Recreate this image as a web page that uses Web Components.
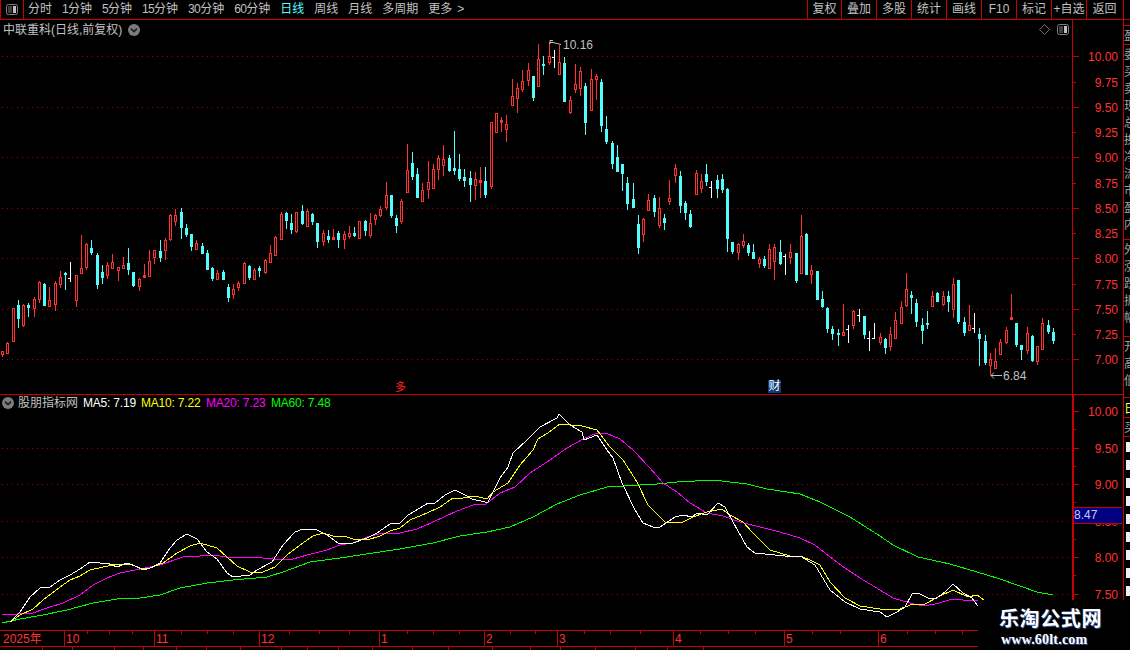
<!DOCTYPE html>
<html lang="zh">
<head>
<meta charset="utf-8">
<title>中联重科</title>
<style>
  html, body { margin: 0; background: #000; }
</style>
</head>
<body>
<stock-app></stock-app>
<script>
const RED_LINE = '#c80000'
const RED_TEXT = '#ff3232'
const CYAN = '#54fcfc'
const DOT = '#a00000'
const GREY = '#c0c0c0'
const LATIN = '"Liberation Sans", "Noto Sans CJK SC", sans-serif'

// Candles, left to right: kind, high, body top, body bottom, low (page y in pixels).
const CANDLES = `r 351 351 354 357|r 342 343 353 354|r 308 308 341 342|c 300 305 318 328|r 304 305 325 327
c 303 305 307 317|r 297 299 308 317|r 281 282 299 303|c 283 284 305 305|r 287 300 306 306
r 281 283 304 311|r 271 277 284 288|c 272 273 274 290|w 262 278 278 282|r 275 275 300 307
r 235 268 273 273|r 243 244 267 270|c 240 248 252 255|c 253 255 284 289|c 265 272 277 284
r 262 265 275 279|r 254 262 268 269|r 267 267 270 281|r 257 265 268 268|c 248 263 269 275
c 272 272 285 287|r 278 279 286 291|f 264 275 277 278|r 250 261 276 276|r 250 250 257 264
c 240 251 257 262|r 238 240 250 260|r 214 215 239 241|r 209 215 221 226|c 208 212 227 239
c 224 228 234 237|c 234 234 246 251|r 240 243 249 249|c 243 246 253 254|c 250 253 269 270
c 267 268 278 281|r 270 273 279 279|c 270 272 279 280|c 284 287 297 302|r 284 289 294 299
r 281 283 287 291|r 262 263 283 283|c 265 266 277 280|r 268 270 279 279|c 266 268 270 277
r 259 260 272 274|r 245 253 262 262|r 236 237 255 256|r 212 214 239 240|c 212 213 220 229
c 214 223 229 234|r 212 212 231 233|c 205 211 223 225|r 209 211 226 226|c 213 214 221 225
c 223 223 241 248|r 230 233 241 246|c 230 236 239 243|f 229 237 239 239|c 231 233 239 248
r 231 234 239 249|r 226 233 236 239|c 227 233 235 237|r 221 221 238 238|c 220 221 230 236
r 213 223 235 238|r 214 215 219 225|r 206 209 215 217|r 182 195 207 210|c 195 195 215 218
c 215 218 225 233|r 199 201 221 224|r 144 170 192 192|c 152 163 176 180|c 168 174 197 197
r 183 190 201 201|r 161 182 189 199|r 164 169 188 189|r 155 158 169 180|r 145 159 165 176
c 155 158 170 172|c 131 168 170 175|c 154 169 178 181|c 169 177 180 187|c 171 178 184 202
r 172 179 185 200|f 167 180 182 198|c 167 181 194 198|r 122 122 186 189|r 113 113 132 132
f 117 120 122 132|r 115 124 129 142|r 79 96 105 106|r 83 88 98 113|r 70 81 89 92
r 63 70 80 86|c 76 76 97 101|r 44 59 86 86|c 56 64 65 75|r 42 56 62 65
w 50 57 57 68|r 45 62 74 74|c 57 63 101 102|r 96 100 112 114|r 64 84 89 93
r 67 71 88 96|c 83 86 122 135|r 69 79 110 110|r 74 76 79 100|c 79 82 125 132
c 116 129 141 144|c 141 143 163 169|c 145 157 171 171|c 164 164 173 191|c 177 183 203 210
c 183 199 207 207|c 215 224 247 254|r 218 219 234 242|r 194 200 210 210|c 195 198 211 217
r 197 208 225 228|c 214 218 222 230|r 180 198 201 205|r 164 168 175 183|c 171 176 205 213
c 201 203 212 220|c 210 214 226 228|r 170 173 194 194|r 174 181 188 193|c 164 174 181 186
w 181 187 187 198|c 175 180 188 198|c 174 179 189 193|c 188 189 238 252|c 242 242 251 254
r 243 244 252 260|r 234 241 245 248|c 243 245 252 256|c 244 252 258 258|r 257 259 263 268
c 256 259 265 268|r 244 249 268 269|r 244 247 261 280|c 240 252 263 265|w 254 256 256 275
r 244 252 257 264|c 253 253 280 283|r 215 236 273 273|c 233 234 274 275|r 265 270 274 284
c 271 271 299 299|c 291 299 306 308|c 307 308 328 333|c 326 329 333 340|c 329 333 334 346
r 304 332 335 335|w 325 329 329 343|r 310 311 325 329|w 309 315 315 322|c 316 316 334 339
w 331 338 338 351|w 323 338 338 339|r 333 337 342 345|c 338 339 347 354|r 327 334 346 351
r 312 320 338 339|r 301 307 323 323|r 273 289 305 307|c 291 295 297 314|c 299 303 321 327
c 318 325 330 344|c 311 323 324 329|r 291 296 306 306|c 292 293 301 302|r 291 296 304 306
c 291 296 301 312|r 278 284 309 318|c 280 280 321 324|c 317 322 332 336|r 305 325 330 330
w 313 328 328 333|c 328 334 338 366|c 335 341 362 365|r 353 359 365 375|r 348 361 368 369
r 339 342 354 354|r 327 330 342 344|f 294 317 319 319|c 323 323 344 347|c 345 345 349 360
r 327 333 350 354|c 335 336 360 362|r 346 346 361 365|r 318 323 349 349|c 320 325 331 334
c 328 332 340 344`.split(/[|\n]/).map(row => {
  const [kind, ...values] = row.trim().split(' ')
  return [kind, ...values.map(Number)]
})

const MA_LINES = [
  { color: '#00ff00', points: '2,623 20,619 43,615 67,610 93,603 117,599 140,598 160,595 180,588 207,583 233,580 267,577 283,572 310,562 340,558 373,553 400,549 433,543 460,536 487,532 510,527 533,517 557,504 580,495 607,487 640,485 657,484 677,482 713,480 747,484 767,489 800,494 820,502 850,517 880,536 893,545 918,557 950,564 977,572 1000,579 1037,592 1053,595' },
  { color: '#ff00ff', points: '2,615 33,613 47,608 63,603 80,595 93,585 107,578 120,573 140,569 160,565 183,557 200,556 213,555 233,558 253,557 273,559 293,559 307,555 327,550 340,545 353,543 367,537 383,533 400,533 417,529 433,522 457,511 473,505 486,504 500,493 515,487 530,473 550,460 567,448 583,439 597,433 608,434 620,439 633,450 650,468 663,483 677,492 690,503 707,513 723,516 740,522 760,527 780,532 800,538 815,545 830,557 845,568 860,578 880,590 893,598 910,603 923,606 935,604 953,599 963,600 978,601' },
  { color: '#ffff00', points: '10,622 20,615 33,609 43,600 60,587 70,580 80,576 90,570 103,567 117,564 130,564 140,568 150,568 163,563 177,553 190,546 200,543 217,548 227,557 237,566 250,572 263,572 275,567 287,555 300,545 313,536 323,533 333,536 347,537 353,539 367,540 380,536 390,531 400,528 410,520 427,513 440,507 453,498 463,498 475,496 487,499 493,492 508,483 520,465 533,450 538,439 548,433 560,424 582,426 597,430 610,447 623,460 637,482 648,505 665,522 683,522 693,517 707,512 722,509 730,515 743,522 753,533 770,550 780,553 790,556 800,556 810,560 820,565 830,582 845,598 860,606 880,609 897,610 905,607 913,604 925,604 938,597 953,590 968,597 977,595 984,600' },
  { color: '#ffffff', points: '10,622 20,612 30,597 40,588 50,587 60,580 70,575 80,569 90,562 100,563 107,563 117,567 127,563 133,565 143,570 150,568 160,563 170,548 177,540 187,534 197,539 207,552 217,559 227,573 233,577 250,575 257,570 272,562 283,545 295,532 303,529 315,529 327,535 338,543 353,543 367,538 377,533 390,524 400,523 408,515 420,508 428,503 435,503 445,495 455,490 465,495 472,499 485,502 488,502 500,478 508,467 513,453 527,440 540,427 557,418 559,414 570,425 582,432 584,440 597,435 607,450 613,458 622,483 635,510 643,523 653,527 660,527 675,517 683,515 692,517 697,513 707,515 718,503 725,507 733,522 747,547 755,553 785,556 800,556 815,565 830,590 845,602 860,609 880,612 887,617 897,612 905,607 912,594 918,593 928,598 937,598 945,592 953,584 963,593 972,598 978,606' }
]

/**
 * Top bar with the period tabs on the left and the tool buttons on the right.
 */
const toolbarTemplate = document.createElement('template')
toolbarTemplate.innerHTML = `
  <style>
    :host {
      display: flex;
      height: 19px;
      border-bottom: 1px solid ${RED_LINE};
      color: ${GREY};
      font: 12px ${LATIN};
      line-height: 19px;
      white-space: nowrap;
    }
    .toggle {
      box-sizing: border-box;
      width: 24px;
      border-left: 1px solid ${RED_LINE};
      border-right: 1px solid ${RED_LINE};
      display: flex;
      align-items: center;
      justify-content: center;
    }
    .periods {
      display: flex;
      gap: 10px;
      padding-left: 4px;
      flex: 1;
    }
    .periods .on { color: #54fcfc; }
    em { font-style: normal; letter-spacing: -.67px; }
    .arrow { margin-left: 5px; }
    .tools { display: flex; }
    .tools span {
      box-sizing: border-box;
      width: 35px;
      text-align: center;
      border-left: 1px solid ${RED_LINE};
    }
    .tools span:first-child { width: 34px; }
    .tools span:last-child {
      width: 38px;
      padding-right: 1px;
      border-right: 1px solid ${RED_LINE};
      margin-right: 6px;
    }
    svg { display: block; }
  </style>
  <div class="toggle">
    <svg width="12" height="11" viewBox="0 0 12 11"><rect x=".5" y=".5" width="11" height="10" rx="2" fill="none" stroke="#808080"/><rect x="2" y="2" width="4" height="7" fill="#404040"/><rect x="7" y="2" width="3" height="7" fill="#c0c0c0"/></svg>
  </div>
  <div class="periods">
    <span>分时</span><span><em>1</em>分钟</span><span><em>5</em>分钟</span><span><em>15</em>分钟</span><span><em>30</em>分钟</span><span><em>60</em>分钟</span>
    <span class="on">日线</span><span>周线</span><span>月线</span><span>多周期</span><span>更多<span class="arrow">&gt;</span></span>
  </div>
  <div class="tools">
    <span>复权</span><span>叠加</span><span>多股</span><span>统计</span><span>画线</span><span>F10</span><span>标记</span><span>+自选</span><span>返回</span>
  </div>
`
customElements.define('tool-bar', class extends HTMLElement {
  constructor () {
    super()
    this.attachShadow({ mode: 'open' }).appendChild(toolbarTemplate.content.cloneNode(true))
  }
})

/**
 * Draws the dotted grid and whatever chart markup is passed in, in page coordinates.
 *
 * @param {number} top - Page y of the top of the svg.
 * @param {number} height - Height of the svg.
 * @param {number[]} rows - Page y of each dotted line.
 * @param {string} body - Svg markup of the chart.
 * @returns {string} The svg element as markup.
 */
function plotSvg (top, height, rows, body) {
  const grid = rows.map(y => `<line x1="2" x2="1072" y1="${y + 0.5}" y2="${y + 0.5}" stroke="${DOT}" stroke-dasharray="1 4"/>`).join('')
  return `<svg width="1072" height="${height}" viewBox="0 ${top} 1072 ${height}" shape-rendering="crispEdges">${grid}${body}</svg>`
}

/**
 * Draws one candle as pixel aligned rectangles.
 *
 * @param {Array} candle - Kind, high, body top, body bottom and low.
 * @param {number} index - Position of the candle in the series.
 * @returns {string} Svg markup.
 */
function candleSvg ([kind, high, top, bottom, low], index) {
  const x = Math.floor(2.5 + 5.255 * index)
  const box = (left, y1, width, y2, fill) => `<rect x="${left}" y="${y1}" width="${width}" height="${Math.max(y2 - y1, 1)}" fill="${fill}"/>`
  if (kind === 'w') {
    return box(x, high, 1, low, '#fff') + box(x - 2, top, 2, top + 1, '#fff')
  }
  const color = kind === 'c' ? CYAN : RED_TEXT
  let out = box(x, high, 1, low, color) + box(x - 1, top, 3, bottom + 1, color)
  if (kind === 'r' && bottom - top > 2) {
    out += box(x, top + 1, 1, bottom, '#000')
  }
  return out
}

/**
 * A value axis: a red rule with ticks and right aligned labels. Pass ticks as a property.
 */
customElements.define('price-axis', class extends HTMLElement {
  constructor () {
    super()
    this.attachShadow({ mode: 'open' })
  }

  /**
   * Renders the axis.
   *
   * @param {object} options - Top, height and the [y, label, long] ticks of the axis.
   */
  draw ({ top, height, ticks, thick }) {
    const marks = ticks.map(([y, label, long]) => `
      <rect x="0" y="${y}" width="${long ? 6 : 3}" height="1" fill="${RED_LINE}" shape-rendering="crispEdges"/>
      ${label ? `<text x="45" y="${y + 5}" text-anchor="end">${label}</text>` : ''}`).join('')
    this.shadowRoot.innerHTML = `
      <style>
        :host {
          display: block;
          position: relative;
          width: 51px;
          height: ${height}px;
          box-sizing: border-box;
          border-left: ${thick ? 2 : 1}px solid ${RED_LINE};
        }
        svg { display: block; margin-left: ${thick ? -1 : 0}px; }
        text { font: 12px ${LATIN}; fill: ${RED_TEXT}; }
      </style>
      <svg width="51" height="${height}" viewBox="0 ${top} 51 ${height}">${marks}</svg>
      <slot></slot>
    `
  }
})

/**
 * Small round grey button with a chevron, used next to the pane titles.
 */
customElements.define('round-chevron', class extends HTMLElement {
  constructor () {
    super()
    this.attachShadow({ mode: 'open' }).innerHTML = `
      <style>
        :host { display: inline-block; width: 12px; height: 12px; }
        svg { display: block; }
      </style>
      <svg width="12" height="12" viewBox="0 0 12 12">
        <circle cx="6" cy="6" r="6" fill="#7c7c7c"/>
        <path d="M3 4.6 6 7.6 9 4.6" fill="none" stroke="#1c1c1c" stroke-width="1.6"/>
      </svg>
    `
  }
})

/**
 * Upper pane: title, candles, high and low notes, event markers and price axis.
 */
customElements.define('kline-pane', class extends HTMLElement {
  constructor () {
    super()
    const candles = CANDLES.map(candleSvg).join('')
    const notes = `
      <g shape-rendering="auto" fill="none" stroke="#c0c0c0">
        <path d="M553 40.5 H550 V44 M550 42.5 H553 L561 44.5"/>
        <path d="M991 375.5 H1002 M994 372.5 L991 375.5 L994 378.5"/>
      </g>`
    this.attachShadow({ mode: 'open' }).innerHTML = `
      <style>
        :host {
          display: flex;
          height: 374px;
          border-bottom: 1px solid ${RED_LINE};
          position: relative;
          font: 12px ${LATIN};
          color: ${GREY};
        }
        svg { display: block; }
        .title {
          position: absolute;
          left: 3px;
          top: 2px;
          line-height: 16px;
          display: flex;
          align-items: center;
          gap: 6px;
        }
        .corner {
          position: absolute;
          left: 1039px;
          top: 4px;
          display: flex;
          align-items: center;
          gap: 7px;
        }
        .note { position: absolute; line-height: 14px; }
        .high { left: 563px; top: 18px; }
        .low { left: 1003px; top: 349px; }
        .badge {
          position: absolute;
          line-height: 13px;
          height: 13px;
        }
        .cai { left: 768px; top: 360px; width: 13px; background: #0a3c78; color: #fff; text-align: center; }
        .duo { left: 395px; top: 361px; color: #ff2020; font-size: 11px; }
      </style>
      ${plotSvg(20, 374, [56, 107, 157, 208, 258, 309, 359], candles + notes)}
      <price-axis></price-axis>
      <div class="title">中联重科(日线,前复权)<round-chevron></round-chevron></div>
      <div class="corner">
        <svg width="11" height="11" viewBox="0 0 11 11"><path d="M5.5 .5 10.5 5.5 5.5 10.5 .5 5.5Z" fill="none" stroke="#707070"/></svg>
        <svg width="13" height="11" viewBox="0 0 13 11"><rect x=".5" y=".5" width="11" height="10" rx="2" fill="none" stroke="#808080"/><rect x="2" y="2" width="4" height="7" fill="#404040"/><rect x="7" y="2" width="3" height="7" fill="#c0c0c0"/></svg>
      </div>
      <span class="note high">10.16</span>
      <span class="note low">6.84</span>
      <span class="badge duo">多</span>
      <span class="badge cai">财</span>
    `
    const ticks = []
    const labels = ['10.00', '9.75', '9.50', '9.25', '9.00', '8.75', '8.50', '8.25', '8.00', '7.75', '7.50', '7.25', '7.00']
    const rows = [56, 82, 107, 132, 157, 183, 208, 233, 258, 284, 309, 334, 359]
    labels.forEach((label, i) => ticks.push([rows[i], label, i % 2 === 0]))
    this.shadowRoot.querySelector('price-axis').draw({ top: 20, height: 374, ticks })
  }
})

/**
 * Lower pane: moving averages with their legend, and the value axis with the cursor box.
 */
customElements.define('ma-pane', class extends HTMLElement {
  constructor () {
    super()
    const lines = MA_LINES.map(line => `<polyline points="${line.points}" fill="none" stroke="${line.color}" stroke-width="1"/>`).join('')
    this.attachShadow({ mode: 'open' }).innerHTML = `
      <style>
        :host {
          display: flex;
          height: 235px;
          position: relative;
          font: 12px ${LATIN};
        }
        svg { display: block; }
        .legend {
          position: absolute;
          left: 2px;
          top: 0;
          line-height: 16px;
          display: flex;
          align-items: center;
          white-space: nowrap;
        }
        .legend b { font-weight: 400; color: ${GREY}; margin: 0 6px 0 4px; width: 59px; }
        .legend span { width: 65px; letter-spacing: -.2px; }
        .cursor {
          position: absolute;
          left: 1074px;
          top: 112px;
          width: 48px;
          height: 15px;
          line-height: 15px;
          background: #000080;
          border-top: 1px solid ${RED_LINE};
          border-bottom: 1px solid ${RED_LINE};
          color: #c8c8ff;
        }
      </style>
      ${plotSvg(395, 235, [448, 484, 521, 557, 594], lines)}
      <price-axis></price-axis>
      <div class="legend">
        <round-chevron></round-chevron>
        <b>股朋指标网</b>
        <span style="color:#fff;width:58px">MA5: 7.19</span>
        <span style="color:#ff0">MA10: 7.22</span>
        <span style="color:#f0f">MA20: 7.23</span>
        <span style="color:#0f0">MA60: 7.48</span>
      </div>
      <div class="cursor">8.47</div>
    `
    const ticks = [
      [411, '10.00', true], [429, '', false], [448, '9.50', true], [466, '', false], [484, '9.00', true],
      [502, '', false], [521, '8.50', true], [539, '', false], [557, '8.00', true], [575, '', false], [594, '7.50', true]
    ]
    this.shadowRoot.querySelector('price-axis').draw({ top: 395, height: 235, ticks, thick: true })
  }
})

/**
 * Date axis under the lower pane.
 */
customElements.define('time-axis', class extends HTMLElement {
  constructor () {
    super()
    const months = [[64, '10'], [154, '11'], [259, '12'], [379, '1'], [484, '2'], [557, '3'], [673, '4'], [784, '5'], [878, '6']]
    const minor = [87, 109, 132, 181, 207, 233, 289, 319, 349, 407, 433, 459, 510, 535, 584, 610, 640, 700, 728, 755, 812, 840, 907, 935, 962]
    const ticks = months.map(([x, label]) => `
      <rect x="${x}" y="0" width="1" height="16" fill="${RED_LINE}"/>
      <text x="${x + 2}" y="12">${label}</text>`).join('')
    const small = minor.map(x => `<rect x="${x}" y="0" width="1" height="3" fill="${RED_LINE}"/>`).join('')
    this.attachShadow({ mode: 'open' }).innerHTML = `
      <style>
        :host {
          display: block;
          height: 15px;
          border-top: 1px solid ${RED_LINE};
          border-bottom: 1px solid ${RED_LINE};
        }
        svg { display: block; }
        text { font: 12px ${LATIN}; fill: ${RED_TEXT}; }
      </style>
      <svg width="1072" height="15" shape-rendering="crispEdges">
        <text x="3" y="12">2025年</text>
        ${ticks}${small}
      </svg>
    `
  }
})

/**
 * Tab row that the window cuts off after its first pixels.
 */
customElements.define('tab-row', class extends HTMLElement {
  constructor () {
    super()
    const stops = [43, 30, 42, 29, 33, 30, 34, 41, 26, 31, 34, 40, 36, 44, 38, 30, 35, 40, 32, 36]
    const cells = stops.map(width => `<i style="width:${width}px"></i>`).join('')
    this.attachShadow({ mode: 'open' }).innerHTML = `
      <style>
        :host { display: flex; height: 4px; overflow: hidden; }
        i { display: block; box-sizing: border-box; height: 4px; border-right: 1px solid ${RED_LINE}; }
      </style>
      ${cells}
    `
  }
})

/**
 * Quote column at the right edge, of which the window only shows a sliver.
 */
customElements.define('side-strip', class extends HTMLElement {
  constructor () {
    super()
    const group = text => text.split('').map(c => `<div>${c}</div>`).join('')
    const stubs = new Array(9).fill('<i></i>').join('')
    this.attachShadow({ mode: 'open' }).innerHTML = `
      <style>
        :host {
          display: block;
          flex: none;
          width: 6px;
          height: 630px;
          overflow: hidden;
          color: #a0a0a0;
          font: 12px "Noto Sans CJK SC", sans-serif;
        }
        .head { height: 5px; border-bottom: 1px solid ${RED_LINE}; }
        .head + .head { height: 18px; line-height: 18px; }
        .rows { overflow: hidden; border-bottom: 1px solid ${RED_LINE}; }
        .rows div { height: 17px; line-height: 17px; }
        .one { height: 194px; }
        .two { height: 96px; }
        .three { height: 60px; }
        .box { height: 19px; line-height: 19px; color: #ffff50; border-bottom: 1px solid ${RED_LINE}; }
        .ask { height: 18px; line-height: 18px; border-bottom: 1px solid ${RED_LINE}; }
        .stubs { padding: 5px 0 0 2px; }
        i { display: block; width: 4px; height: 10px; margin-bottom: 8px; background: #f0f0f0; }
      </style>
      <div class="head"></div>
      <div class="head">盈</div>
      <div class="rows one">${group('委买卖现总换净流市盈内')}</div>
      <div class="rows two">${group('外涨跌振幅')}</div>
      <div class="rows three">${group('开高低')}</div>
      <div class="box">日</div>
      <div class="ask">买</div>
      <div class="stubs">${stubs}</div>
    `
  }
})

/**
 * Watermark of the site, placed over the bottom right corner of the chart.
 */
customElements.define('site-mark', class extends HTMLElement {
  constructor () {
    super()
    this.attachShadow({ mode: 'open' }).innerHTML = `
      <style>
        :host {
          position: absolute;
          left: 978px;
          top: 600px;
          width: 152px;
          height: 50px;
          background: #000;
          color: #fff;
          text-shadow: 1px 1px 0 #2a4f9c;
        }
        div { position: absolute; white-space: nowrap; }
        .name {
          left: 21px;
          top: 5px;
          font: 700 20px/26px "Noto Sans CJK SC", sans-serif;
          letter-spacing: .6px;
        }
        .url {
          left: 23px;
          top: 32px;
          font: 700 14px/16px "Liberation Serif", serif;
          letter-spacing: .2px;
        }
      </style>
      <div class="name">乐淘公式网</div>
      <div class="url">www.60lt.com</div>
    `
  }
})

/**
 * The whole terminal window.
 */
customElements.define('stock-app', class extends HTMLElement {
  constructor () {
    super()
    this.attachShadow({ mode: 'open' }).innerHTML = `
      <style>
        :host {
          display: block;
          position: relative;
          width: 1130px;
          height: 650px;
          overflow: hidden;
          background: #000;
        }
        .work { display: flex; }
        .charts { flex: none; box-sizing: border-box; width: 1124px; border-right: 1px solid ${RED_LINE}; }
      </style>
      <tool-bar></tool-bar>
      <div class="work">
        <div class="charts">
          <kline-pane></kline-pane>
          <ma-pane></ma-pane>
          <time-axis></time-axis>
          <tab-row></tab-row>
        </div>
        <side-strip></side-strip>
      </div>
      <site-mark></site-mark>
    `
  }
})
</script>
</body>
</html>
